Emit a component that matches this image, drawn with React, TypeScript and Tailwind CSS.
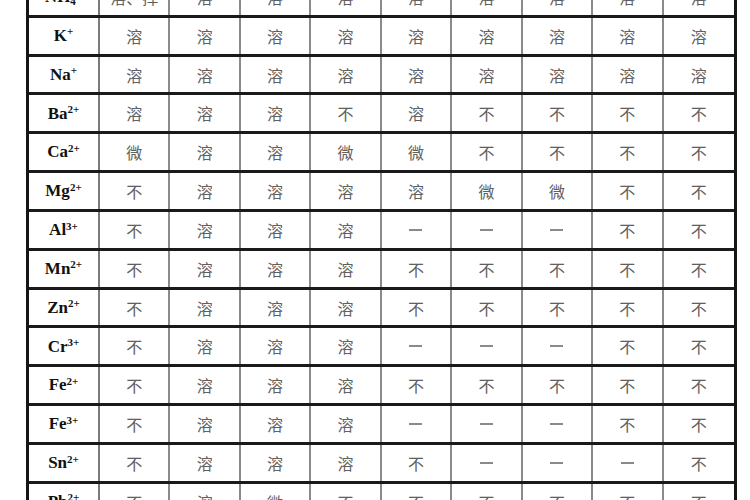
import React from "react";

type Row = { ion: string; sub?: string; charge: string; cells: string[] };

const R = "溶";
const B = "不";
const W = "微";
const D = "—";

const rows: Row[] = [
  { ion: "NH", sub: "4", charge: "+", cells: ["溶、挥", R, R, R, R, R, R, R, R] },
  { ion: "K", charge: "+", cells: [R, R, R, R, R, R, R, R, R] },
  { ion: "Na", charge: "+", cells: [R, R, R, R, R, R, R, R, R] },
  { ion: "Ba", charge: "2+", cells: [R, R, R, B, R, B, B, B, B] },
  { ion: "Ca", charge: "2+", cells: [W, R, R, W, W, B, B, B, B] },
  { ion: "Mg", charge: "2+", cells: [B, R, R, R, R, W, W, B, B] },
  { ion: "Al", charge: "3+", cells: [B, R, R, R, D, D, D, B, B] },
  { ion: "Mn", charge: "2+", cells: [B, R, R, R, B, B, B, B, B] },
  { ion: "Zn", charge: "2+", cells: [B, R, R, R, B, B, B, B, B] },
  { ion: "Cr", charge: "3+", cells: [B, R, R, R, D, D, D, B, B] },
  { ion: "Fe", charge: "2+", cells: [B, R, R, R, B, B, B, B, B] },
  { ion: "Fe", charge: "3+", cells: [B, R, R, R, D, D, D, B, B] },
  { ion: "Sn", charge: "2+", cells: [B, R, R, R, B, D, D, D, B] },
  { ion: "Pb", charge: "2+", cells: [B, R, W, B, B, B, B, B, B] },
];

const serif = "font-['Liberation_Serif','Times_New_Roman',serif]";
const cjk = "font-['Noto_Sans_CJK_SC','Noto_Sans_CJK_JP',sans-serif]";

// solubility table, top row cut off by the viewport
export default function App() {
  return (
    <div className="w-[750px] h-[500px] overflow-hidden bg-white">
      <div className="ml-[26px] mt-[-21px] w-[711px] border-x-[3px] border-[#151515]">
        {rows.map((row, i) => (
          <div
            key={i}
            className="grid h-[38.83px] grid-cols-[71px_repeat(9,minmax(0,1fr))] border-b-[3px] border-[#1a1a1a]"
          >
            <div
              className={`flex items-center justify-center border-r-2 border-[#7a7a7a] text-[17px] font-bold text-[#111] ${serif}`}
            >
              <span>
                {row.ion}
                {row.sub && <sub className="text-[11px]">{row.sub}</sub>}
                <sup className="text-[11px]">{row.charge}</sup>
              </span>
            </div>
            {row.cells.map((c, j) => (
              <div
                key={j}
                className={`flex items-center justify-center text-[16px] text-[#606060] ${
                  j < 8 ? "border-r-2 border-[#8a8a8a]" : ""
                } ${c === D ? serif : cjk}`}
              >
                {c === D ? <span className="block h-[2px] w-[13px] bg-[#8a8a8a]" /> : c}
              </div>
            ))}
          </div>
        ))}
      </div>
    </div>
  );
}
